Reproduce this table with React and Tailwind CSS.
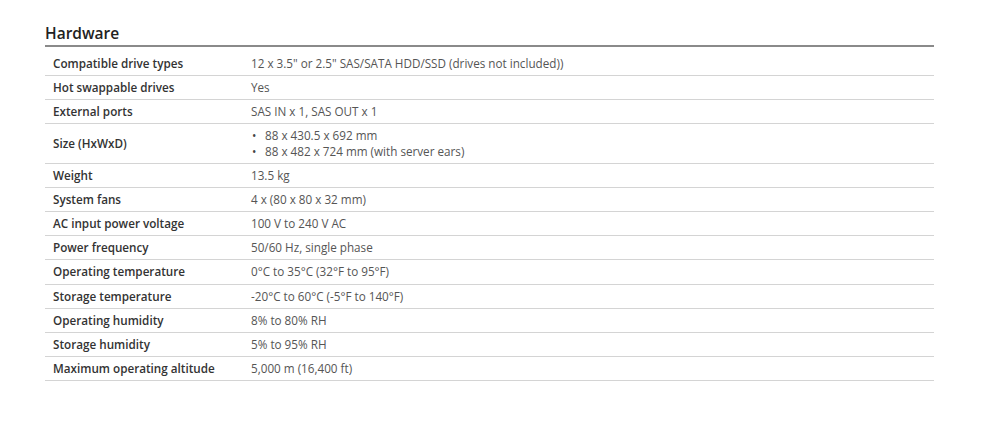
import React from 'react';

const specs = [
  { label: 'Compatible drive types', value: '12 x 3.5" or 2.5" SAS/SATA HDD/SSD (drives not included))' },
  { label: 'Hot swappable drives', value: 'Yes' },
  { label: 'External ports', value: 'SAS IN x 1, SAS OUT x 1' },
  { label: 'Size (HxWxD)', list: ['88 x 430.5 x 692 mm', '88 x 482 x 724 mm (with server ears)'] },
  { label: 'Weight', value: '13.5 kg' },
  { label: 'System fans', value: '4 x (80 x 80 x 32 mm)' },
  { label: 'AC input power voltage', value: '100 V to 240 V AC' },
  { label: 'Power frequency', value: '50/60 Hz, single phase' },
  { label: 'Operating temperature', value: '0°C to 35°C (32°F to 95°F)' },
  { label: 'Storage temperature', value: '-20°C to 60°C (-5°F to 140°F)' },
  { label: 'Operating humidity', value: '8% to 80% RH' },
  { label: 'Storage humidity', value: '5% to 95% RH' },
  { label: 'Maximum operating altitude', value: '5,000 m (16,400 ft)' },
];

const SpecRow = ({ spec }) => (
  <div className="flex border-b border-[#d4d4d4] py-[4px] text-[11.7px] leading-[15.15px]">
    <div className="w-[206px] shrink-0 pl-[8px] font-semibold text-[#333]">
      <div className="flex h-full items-center">{spec.label}</div>
    </div>
    <div className="text-[#555]">
      {spec.list ? (
        spec.list.map((item, i) => (
          <div key={i} className="flex">
            <span className="w-[14px] pl-[1px] text-[#444]">•</span>
            <span>{item}</span>
          </div>
        ))
      ) : (
        spec.value
      )}
    </div>
  </div>
);

const App = () => {
  return (
    <div
      className="min-h-[428px] bg-white pt-[22px]"
      style={{ fontFamily: '"Open Sans", "Liberation Sans", sans-serif' }}
    >
      <div className="ml-[45px] w-[889px]">
        <h2 className="border-b-2 border-[#8a8a8a] text-[15.5px] font-semibold leading-[23px] text-[#222]">
          Hardware
        </h2>
        <div className="mt-[5px]">
          {specs.map((spec, index) => (
            <SpecRow key={index} spec={spec} />
          ))}
        </div>
      </div>
    </div>
  );
};

export default App;
